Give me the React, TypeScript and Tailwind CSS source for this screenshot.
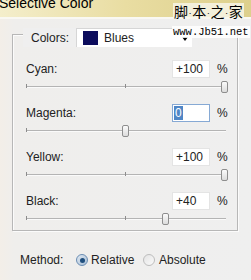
import React from "react";

const sans = { fontFamily: '"Liberation Sans", Arial, sans-serif' };

type Row = { name: string; value: string; pos: number; focused?: boolean };

const rows: Row[] = [
  { name: "Cyan:", value: "+100", pos: 100 },
  { name: "Magenta:", value: "0", pos: 0, focused: true },
  { name: "Yellow:", value: "+100", pos: 100 },
  { name: "Black:", value: "+40", pos: 40 },
];

function Slider({ pos }: { pos: number }) {
  // -100..100 maps onto the 200px track, 0 sits on the centre tick
  const center = 99 + (pos / 100) * 99;
  return (
    <div className="relative mt-[1px] h-[14px] w-[200px] pt-[7px]">
      <div className="h-[1px] w-full bg-[#b4b4b4]" />
      <div className="h-[1px] w-full bg-[#fafafa]" />
      <div className="absolute left-0 top-[5px] h-[4px] w-[1px] bg-[#8c8c8c]" />
      <div className="absolute left-[99px] top-[5px] h-[4px] w-[1px] bg-[#8c8c8c]" />
      <div
        className="absolute top-[2px] h-[12px] w-[7px] rounded-[2px] border border-[#8e8e8e] bg-gradient-to-b from-[#fbfbfb] to-[#dcdcdc]"
        style={{ left: center - 3 }}
      />
    </div>
  );
}

function Radio({ checked }: { checked?: boolean }) {
  return checked ? (
    <span className="flex h-[12px] w-[12px] items-center justify-center rounded-full border border-[#6a8db3] bg-gradient-to-br from-[#dfe8f1] to-[#a9bfd6]">
      <span className="h-[5px] w-[5px] rounded-full bg-[#1f4f7e]" />
    </span>
  ) : (
    <span className="h-[12px] w-[12px] rounded-full border border-[#bdbdbd] bg-gradient-to-br from-[#e4e4e4] to-[#fafafa]" />
  );
}

export default function App() {
  return (
    <div
      className="relative h-[280px] w-[251px] overflow-hidden bg-[linear-gradient(90deg,#f3eee8_0px,#efeeec_14px,#efefef_100%)] text-[12px] text-[#222]"
      style={sans}
    >
      {/* title bar, text cut at the top */}
      <div className="h-[17px] overflow-hidden bg-gradient-to-r from-[#f4eecb] via-[#e9dda2] to-[#ddd08c]">
        <div className="-ml-[1px] -mt-[6px] text-[14px] leading-[18px] text-black">Selective Color</div>
      </div>
      <div className="h-[2px] bg-[#f9f8f2]" />

      {/* group box */}
      <div className="ml-[12px] mt-[15px] w-[226px] border border-[#b7b7b7] pb-[5px] pl-[13px] shadow-[inset_1px_1px_0_#fbfbfb,1px_1px_0_#fbfbfb]">
        <div className="-ml-[3px] -mt-[7px] flex h-[19px] w-[175px] items-center bg-[#efefef] pl-[8px]">
          <span className="w-[45px]">Colors:</span>
          <div className="flex h-[19px] w-[116px] items-center border-l border-t border-[#d6d6d6] bg-white pl-[6px]">
            <span className="h-[14px] w-[15px] bg-[#0c0c5c]" />
            <span className="ml-[6px] flex-1">Blues</span>
            <span className="mr-[4px] mt-[2px] h-0 w-0 border-x-[3px] border-t-[4px] border-x-transparent border-t-black" />
          </div>
        </div>

        <div className="mt-[13px] flex flex-col gap-[11px]">
          {rows.map((r) => (
            <div key={r.name}>
              <div className="flex h-[18px] items-center">
                <span className="w-[146px]">{r.name}</span>
                <div
                  className={`flex h-[18px] w-[38px] items-center bg-white ${
                    r.focused ? "border border-[#86a9d4] pl-[1px]" : "border border-[#e4e4e4] pl-[3px]"
                  }`}
                >
                  {r.focused ? (
                    <span className="bg-[#4f86c6] px-[1px] leading-[14px] text-white">{r.value}</span>
                  ) : (
                    <span>{r.value}</span>
                  )}
                </div>
                <span className="ml-[7px]">%</span>
              </div>
              <Slider pos={r.pos} />
            </div>
          ))}
        </div>
      </div>

      {/* method */}
      <div className="mt-[21px] flex h-[16px] items-center pl-[20px]">
        <span className="w-[56px]">Method:</span>
        <Radio checked />
        <span className="ml-[3px] w-[52px]">Relative</span>
        <Radio />
        <span className="ml-[4px]">Absolute</span>
      </div>

      {/* watermark overlay */}
      <div className="absolute left-[173px] top-[3px] flex items-end bg-[#f8f6ec]/80 px-[1px] text-[14px] leading-[16px] text-black" style={{ fontFamily: '"Noto Sans CJK SC", sans-serif' }}>
        <span>脚</span><span className="px-[1px] text-[8px]">.</span>
        <span>本</span><span className="px-[1px] text-[8px]">.</span>
        <span>之</span><span className="px-[1px] text-[8px]">.</span>
        <span>家</span>
      </div>
      <div
        className="absolute left-[172px] top-[26px] bg-white/85 px-[1px] text-[10.5px] leading-[12px] text-black"
        style={{ fontFamily: '"Liberation Mono", monospace' }}
      >
        www.Jb51.net
      </div>
    </div>
  );
}
